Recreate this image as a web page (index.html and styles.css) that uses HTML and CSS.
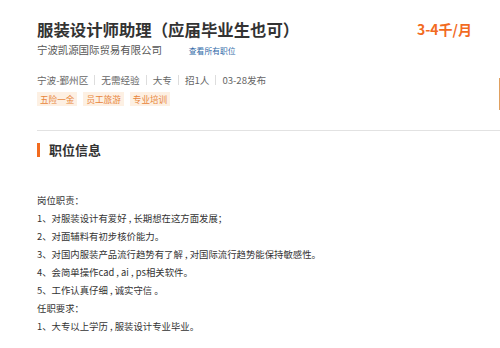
FILE: index.html
```html
<!DOCTYPE html>
<html lang="zh">
<head>
<meta charset="utf-8">
<link rel="stylesheet" href="styles.css">
</head>
<body>
<div class="page">
  <div class="head">
    <div class="head-row">
      <h1 class="title">服装设计师助理（应届毕业生也可）</h1>
      <div class="salary">3-4千/月</div>
    </div>
    <div class="company-row">
      <span class="company">宁波凯源国际贸易有限公司</span>
      <a class="all-jobs">查看所有职位</a>
    </div>
    <div class="meta">
      <span>宁波-鄞州区</span><i class="sep"></i>
      <span>无需经验</span><i class="sep"></i>
      <span>大专</span><i class="sep"></i>
      <span>招1人</span><i class="sep"></i>
      <span>03-28发布</span>
    </div>
    <div class="tags">
      <span class="tag">五险一金</span>
      <span class="tag">员工旅游</span>
      <span class="tag">专业培训</span>
    </div>
    <div class="edge-btn"></div>
  </div>
  <div class="section">
    <h2 class="sec-title">职位信息</h2>
    <div class="desc">
      <p>岗位职责：</p>
      <p>1、对服装设计有爱好 , 长期想在这方面发展；</p>
      <p>2、对面辅料有初步核价能力。</p>
      <p>3、对国内服装产品流行趋势有了解 , 对国际流行趋势能保持敏感性。</p>
      <p>4、会简单操作cad , ai , ps相关软件。</p>
      <p>5、工作认真仔细 , 诚实守信 。</p>
      <p>任职要求：</p>
      <p>1、大专以上学历 , 服装设计专业毕业。</p>
    </div>
  </div>
</div>
</body>
</html>
```
FILE: styles.css
```css
* { box-sizing: border-box; }
html, body { margin: 0; padding: 0; background: #fff; }
body {
  font-family: "Noto Sans CJK SC", "Microsoft YaHei", sans-serif;
  color: #333;
  width: 500px;
  height: 348px;
  overflow: hidden;
}
.page { padding-left: 37px; }
.head {
  position: relative;
  padding-top: 18px;
  padding-bottom: 24px;
  border-bottom: 1px solid #e2e2e2;
}
.head-row {
  display: flex;
  justify-content: space-between;
  align-items: center;
  padding-right: 28px;
}
.title {
  margin: 0;
  font-size: 16.4px;
  line-height: 22px;
  font-weight: 700;
  color: #333;
}
.salary {
  font-size: 14px;
  font-weight: 700;
  color: #f26b1f;
  line-height: 22px;
}
.company-row {
  display: flex;
  align-items: center;
  margin-top: 1px;
  height: 16px;
}
.company {
  font-size: 10.5px;
  color: #555;
  letter-spacing: -0.1px;
}
.all-jobs {
  margin-left: 27px;
  font-size: 7.8px;
  color: #2f6aa8;
  margin-top: 2px;
}
.meta {
  display: flex;
  align-items: center;
  margin-top: 16px;
  font-size: 9.6px;
  color: #666;
  height: 14px;
}
.sep {
  display: inline-block;
  width: 1px;
  height: 10px;
  background: #ddd;
  margin: 0 6px;
}
.tags {
  display: flex;
  gap: 6px;
  margin-top: 5px;
  height: 14px;
}
.tag {
  background: #fdf0e3;
  color: #e8853a;
  font-size: 8.6px;
  line-height: 14px;
  padding: 0 3px;
}
.edge-btn {
  position: absolute;
  left: 462px;
  top: 78px;
  width: 1px;
  height: 32px;
  background: #e0a060;
}
.section { padding-top: 12px; }
.sec-title {
  margin: 0;
  font-size: 13px;
  font-weight: 700;
  line-height: 14px;
  height: 14px;
  padding-left: 9px;
  border-left: 3px solid #f26b1f;
  color: #333;
}
.desc {
  margin-top: 34px;
  font-size: 9.4px;
  line-height: 18px;
  color: #333;
}
.desc p { margin: 0; }
```
